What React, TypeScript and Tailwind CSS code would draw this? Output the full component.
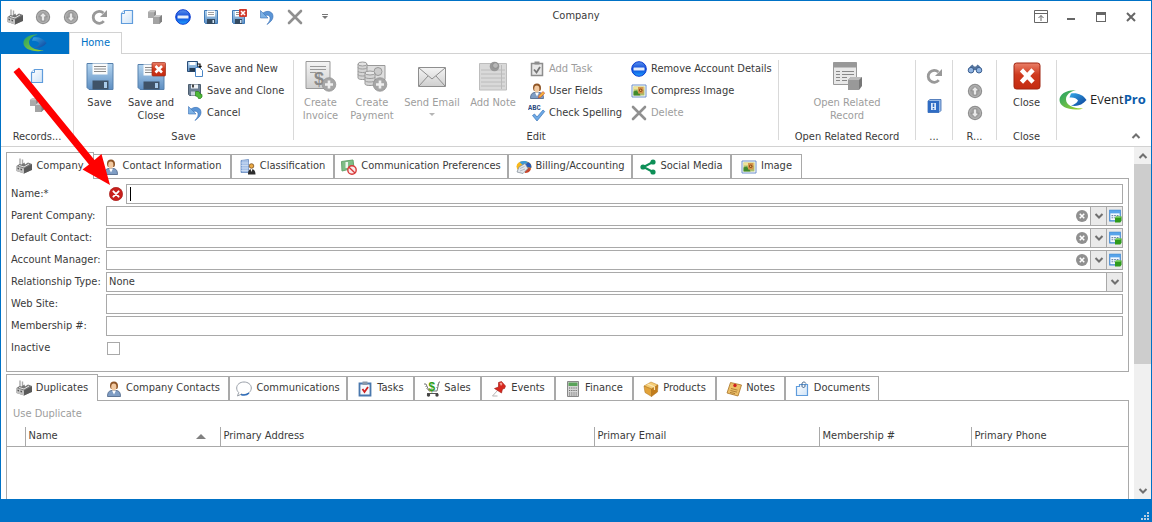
import type { ReactNode } from "react";

type IconProps = { className?: string };
const S16 = "h-4 w-4 shrink-0";

function Gradients() {
  return (
    <svg className="absolute h-0 w-0" aria-hidden="true">
      <defs>
        <linearGradient id="disk" x1="0" y1="0" x2="0" y2="1">
          <stop offset="0" stopColor="#b4d5f0" />
          <stop offset="1" stopColor="#5d8ec2" />
        </linearGradient>
        <linearGradient id="pale" x1="0" y1="0" x2="1" y2="1">
          <stop offset="0" stopColor="#ffffff" />
          <stop offset="1" stopColor="#cfe3f7" />
        </linearGradient>
        <linearGradient id="red" x1="0" y1="0" x2="0" y2="1">
          <stop offset="0" stopColor="#ea8069" />
          <stop offset="0.45" stopColor="#cf3a1e" />
          <stop offset="1" stopColor="#c42a10" />
        </linearGradient>
        <linearGradient id="blueball" x1="0" y1="0" x2="0" y2="1">
          <stop offset="0" stopColor="#5b93ee" />
          <stop offset="0.5" stopColor="#0b48d8" />
          <stop offset="1" stopColor="#22a0ff" />
        </linearGradient>
        <linearGradient id="swooshGreen" x1="0" y1="0" x2="1" y2="1">
          <stop offset="0" stopColor="#1e9f6a" />
          <stop offset="1" stopColor="#a5d52a" />
        </linearGradient>
        <linearGradient id="swooshBlue" x1="0" y1="0" x2="1" y2="1">
          <stop offset="0" stopColor="#35a9e8" />
          <stop offset="1" stopColor="#0b3f98" />
        </linearGradient>
        <linearGradient id="btnface" x1="0" y1="0" x2="0" y2="1">
          <stop offset="0" stopColor="#f4f4f4" />
          <stop offset="1" stopColor="#cfcfcf" />
        </linearGradient>
      </defs>
    </svg>
  );
}

function Svg16({ children, className = S16 }: { children: ReactNode; className?: string }) {
  return (
    <svg viewBox="0 0 16 16" className={className} aria-hidden="true">
      {children}
    </svg>
  );
}
function Svg28({ children }: { children: ReactNode }) {
  return (
    <svg viewBox="0 0 32 32" className="h-8 w-8 shrink-0" aria-hidden="true">
      {children}
    </svg>
  );
}

const Factory = () => (
  <Svg16>
    <path d="M4 0.5v7M6.5 1.5v6" stroke="#aaa" strokeWidth="1.4" />
    <path d="M0.5 8l3-2 2 .5 3-2 .5 2 3-2 4 1.5v5.500l-8 4-7.500-2.500z" fill="#777" />
    <path d="M0.500 8l7.500 2.500v5l-7.500-2.500z" fill="#c2c2c2" />
    <path d="M1.500 9.500l1.500.5v1.500l-1.500-.5zM4.500 10.500l1.500.5v1.500l-1.500-.5z" fill="#555" />
    <path d="M8 10.500l8-4v5.500l-8 3.500z" fill="#5a5a5a" />
    <path d="M3 7.500l5 1.500 5-3" stroke="#e6e6e6" fill="none" />
  </Svg16>
);
const RoundArrow = ({ down }: { down?: boolean }) => (
  <Svg16>
    <circle cx="8" cy="8" r="7.200" fill="#8f8f8f" />
    <circle cx="8" cy="8" r="5.600" fill="#a6a6a6" stroke="#bdbdbd" strokeWidth="0.700" />
    <path
      d={down ? "M8 12.500l4-4.200H9.700V4H6.300v4.300H4z" : "M8 3.500l4 4.200H9.700V12H6.300V7.700H4z"}
      fill="#e9e9e9"
      stroke="#808080"
      strokeWidth="0.700"
    />
  </Svg16>
);
const Refresh = () => (
  <Svg16>
    <path d="M12.800 12.200A6 6 0 1 1 12.400 4" fill="none" stroke="#999" strokeWidth="2.800" />
    <path d="M16 1v7H9z" fill="#999" />
  </Svg16>
);
const NewDoc = () => (
  <Svg16>
    <path d="M5.500 1.500h8v13h-11v-10z" fill="url(#pale)" stroke="#5f9cdc" strokeWidth="1.200" />
    <path d="M5.500 1.500v3h-3" fill="#fff" stroke="#5f9cdc" strokeWidth="1" />
  </Svg16>
);
const Cubes = () => (
  <Svg16>
    <path d="M1 3l2-1.500h6v6l-2 1.500H1z" fill="#8c8c8c" />
    <path d="M1 3.500h6V9H1z" fill="#aaa" />
    <path d="M1 3.500l2-2h6l-2 2z" fill="#c6c6c6" />
    <path d="M6 8l2.500-2H15v6.500L12.500 15H6z" fill="#808080" />
    <path d="M6 8h6.500v7H6z" fill="#a3a3a3" />
    <path d="M6 8l2.500-2H15l-2.500 2z" fill="#ccc" />
  </Svg16>
);
const BlueMinus = () => (
  <Svg16>
    <circle cx="8" cy="8" r="7.300" fill="url(#blueball)" stroke="#0a3bd0" strokeWidth="1" />
    <rect x="2.500" y="6.500" width="11" height="3" rx="0.500" fill="#e6eefb" />
  </Svg16>
);
const Disk = () => (
  <Svg16>
    <path d="M1.500 1.500h13v13H2.500l-1-1z" fill="url(#disk)" stroke="#3f7ab8" />
    <path d="M4 1.500h8v6H4z" fill="#fff" />
    <path d="M5 3.500h6M5 5.500h6" stroke="#888" strokeWidth="0.800" />
    <path d="M4 10h8v5H4z" fill="#344a60" />
    <path d="M9.500 11h1.500v3H9.500z" fill="#cfe3f5" />
  </Svg16>
);
const DiskClose = () => (
  <Svg16>
    <path d="M1.500 1.500h12v13H2.500l-1-1z" fill="url(#disk)" stroke="#3f7ab8" />
    <path d="M4 2h5v5.500H4z" fill="#fff" />
    <path d="M5 3.500h4M5 5.500h4" stroke="#777" strokeWidth="0.800" />
    <path d="M4 10h7v5H4z" fill="#344a60" />
    <path d="M9 11h1.500v3H9z" fill="#cfe3f5" />
    <rect x="8" y="0" width="8" height="8" rx="1" fill="#cf3a2c" />
    <path d="M10 2l4 4M14 2l-4 4" stroke="#fff" strokeWidth="1.600" />
  </Svg16>
);
const Undo = () => (
  <Svg16>
    <path d="M4 4C9 0.500 14.500 3 14 8c-.3 3-2.500 5-6 7.500C10.500 12.500 11.500 10.500 11 8.500 10.300 6 8 5.500 6 7z" fill="#5b95d6" stroke="#3a70b5" strokeWidth="0.600" />
    <path d="M1.500 1.500v7.500H9z" fill="#7db2e6" stroke="#3a70b5" strokeWidth="0.600" />
  </Svg16>
);
const GrayX = () => (
  <Svg16>
    <path d="M2 2l12 12M14 2L2 14" stroke="#909090" strokeWidth="2.600" strokeLinecap="round" />
  </Svg16>
);
const DiskNew = () => (
  <Svg16>
    <path d="M0.500 0.500h10v10H0.500z" fill="url(#disk)" stroke="#2b4e78" />
    <path d="M2.500 1h6v3h-6z" fill="#fff" />
    <path d="M2.500 7h6v3.500h-6z" fill="#24394f" />
    <path d="M8.500 6.500h4l3 3v6h-7z" fill="#fff" stroke="#4b86c6" />
    <path d="M10 3h3v3M11.500 5l1.500 1.500L14.500 5" stroke="#111" fill="none" strokeWidth="1.200" />
  </Svg16>
);
const DiskClone = () => (
  <Svg16>
    <path d="M1.500 1.500h12v11h-11l-1-1z" fill="#6c7f94" stroke="#4d5e70" />
    <path d="M4 1.500h7v4H4z" fill="#eef2f6" />
    <path d="M5 1.500h2v3H5z" fill="#444" />
    <path d="M4 8.500h5v4H4z" fill="#c9d3de" />
    <path d="M8.500 8.500h3l1.500 1.500v1l2 .5v2.500l-1.500 1.500h-2l-1-2-2-.5v-3z" fill="#4fba38" stroke="#2a7f1a" strokeWidth="0.700" />
  </Svg16>
);
const TaskGray = () => (
  <Svg16>
    <path d="M2.500 2.500h11v12h-11z" fill="#e8e8e8" stroke="#8d8d8d" strokeWidth="1.500" />
    <path d="M5.500 0.500h5v3h-5z" fill="#8d8d8d" />
    <path d="M5 8.500l2.500 3L11 6" stroke="#777" strokeWidth="1.800" fill="none" />
  </Svg16>
);
const TaskColor = () => (
  <Svg16>
    <path d="M2.500 2.500h11v12h-11z" fill="#f5f8fc" stroke="#4a78ad" strokeWidth="1.800" />
    <path d="M5.500 0.500h5v3.500h-5z" fill="#8a98a8" />
    <path d="M5.500 8l2 3L11 6" stroke="#d02020" strokeWidth="1.800" fill="none" />
  </Svg16>
);
const Person = ({ pencil }: { pencil?: boolean }) => (
  <Svg16>
    <path d="M1.500 15.500c0-4 1.500-6 4.500-6h4c3 0 4.500 2 4.500 6z" fill="#7f9dc4" stroke="#466084" strokeWidth="0.800" />
    <path d="M6 9.500L8 13.500l2-4z" fill="#fff" />
    <path d="M4 4.500C4 2 5.500 0.500 8 0.500s4 1.500 4 4.500c0 1.500-.5 2.500-1 3L5 8c-.6-.8-1-2-1-3.500z" fill="#8f5526" />
    <ellipse cx="7.800" cy="6" rx="2.600" ry="3.400" fill="#f2c9a0" />
    {pencil && <path d="M9.500 15l.5-2.500 4-4 1.700 1.700-4 4z" fill="#f6b63c" stroke="#c43a2a" strokeWidth="0.600" />}
  </Svg16>
);
const Spell = () => (
  <svg viewBox="0 0 18 18" className="h-4.5 w-4.5 shrink-0" aria-hidden="true">
    <text x="0" y="6" fontSize="7" fontWeight="700" fontFamily="Liberation Mono, monospace" fill="#2b4a80">
      ABC
    </text>
    <path d="M4.500 11.500l2-1.500 2.500 3 6-7 1.700 1.500L9 17z" fill="#6faae6" stroke="#3a74b8" strokeWidth="0.700" />
  </svg>
);
const Picture = () => (
  <Svg16>
    <path d="M1 2h14v12H1z" fill="#fff" stroke="#6d8fc9" strokeWidth="1" />
    <path d="M2.500 3.500h11v9h-11z" fill="#a9bf6a" />
    <path d="M2.500 3.500h11v3h-11z" fill="#efe29a" />
    <path d="M2.500 12.500v-4l3-1 3 3 1 2z" fill="#418a2c" />
    <path d="M7 4h5.500v6.500H7z" fill="#d4954c" />
    <circle cx="9.700" cy="7.200" r="1.700" fill="#8d4a18" />
    <circle cx="9.700" cy="7.200" r="0.700" fill="#f3c878" />
  </Svg16>
);
const Building = () => (
  <Svg16>
    <path d="M1 1.500L8.500 0.500v13H1z" fill="#8db0e0" stroke="#5a80b8" strokeWidth="0.700" />
    <path d="M3 1v12M5 1v12M7 1v12M1 4h7.500M1 6.500h7.500M1 9h7.500M1 11.500h7.500" stroke="#e2edfa" strokeWidth="0.600" />
    <circle cx="11.500" cy="7" r="2.300" fill="#e9a944" stroke="#6b3f10" strokeWidth="0.700" />
    <path d="M8 15.500c0-4 1.500-5.500 3.500-5.500s4 1.500 4 5.500z" fill="#2c2c2c" />
    <path d="M10.500 10l1 3 1-3z" fill="#fff" />
  </Svg16>
);
const NoComm = () => (
  <Svg16>
    <path d="M0.500 2.500L12 1l1 8-12 3z" fill="#7fbd86" stroke="#68a56f" />
    <path d="M4.500 3h2.500v6h-2.500z" fill="#eef8ef" />
    <circle cx="11" cy="11" r="4.200" fill="#fbe9e9" stroke="#d83a3a" strokeWidth="1.400" />
    <path d="M8 8.200l6 5.700" stroke="#d83a3a" strokeWidth="1.400" />
  </Svg16>
);
const Billing = () => (
  <Svg16>
    <ellipse cx="8" cy="7.500" rx="7.500" ry="5.500" fill="#f9b81c" />
    <path d="M8 7.500L3.500 3C6 1.500 10 1.500 12 3z" fill="#3a9ad8" />
    <path d="M8 7.500L12 3c2.500 1 3.800 3 3.300 6z" fill="#2558b8" />
    <path d="M8 7.500l7 2c-.5 3-3 4.500-6 4.500z" fill="#c8452a" />
    <path d="M1 13l2-5 6-3.500 3 5-5 5z" fill="#e3e7eb" stroke="#7d8894" strokeWidth="0.700" />
    <path d="M4 9.500l4.500-2M4 12l5-2" stroke="#9aa5b0" strokeWidth="0.700" />
  </Svg16>
);
const Share = () => (
  <Svg16>
    <path d="M13 3L3.500 8l9.500 5" stroke="#0d8f57" strokeWidth="2" fill="none" />
    <circle cx="13" cy="3" r="2.600" fill="#0d8f57" />
    <circle cx="3" cy="8" r="2.600" fill="#0d8f57" />
    <circle cx="13" cy="13" r="2.600" fill="#0d8f57" />
  </Svg16>
);
const Bubble = () => (
  <Svg16>
    <path d="M8 1c4 0 7.300 2.500 7.300 6S12 13.500 8 13.500c-1 0-1.800 0-2.600-.4L1.500 15l1.200-3.500C1.300 10.300.7 8.700.7 7 .7 3.500 4 1 8 1z" fill="#fff" stroke="#999fa8" />
    <path d="M5 13.500c3 1 6 .5 8-1.500" stroke="#2f6dbb" strokeWidth="1.500" fill="none" />
  </Svg16>
);
const Cart = () => (
  <Svg16>
    <path d="M0 3h2l3 7h8l2-9h1" stroke="#777" strokeWidth="1" fill="none" />
    <path d="M1.500 5l1 1M2.500 7.500l1 1M14 4h-1M13.500 6.500h-1" stroke="#777" />
    <path d="M3 12.500h11" stroke="#555" />
    <circle cx="4.500" cy="14" r="1.700" fill="#444" />
    <circle cx="13" cy="14" r="1.700" fill="#444" />
    <text x="4.500" y="9.500" fontSize="12" fontWeight="700" fontFamily="Liberation Sans, sans-serif" fill="#2f9e18">
      $
    </text>
  </Svg16>
);
const Pin = () => (
  <Svg16>
    <path d="M6.500 9.500L1.500 15h5" stroke="#b5b5b5" strokeWidth="1" fill="none" />
    <path d="M7.500 1.500l3-1 4 4.500-1 2.500-2 .5-1 4L3.500 7.500l4-1.500z" fill="#d8281e" stroke="#9a1610" strokeWidth="0.600" />
    <path d="M8.500 2l2-.5 1 1.500-1.500 2z" fill="#f49b93" />
  </Svg16>
);
const Calc = () => (
  <Svg16>
    <path d="M2.500 0.500h11v15h-11z" fill="#d5d5d5" stroke="#888" />
    <path d="M3.500 1.500h9v3.500h-9z" fill="#5aa35a" />
    <path d="M4 7h8M4 9.500h8M4 12h8M4 14h8" stroke="#6b6b6b" strokeWidth="1" strokeDasharray="1.200 1" />
  </Svg16>
);
const Box = () => (
  <Svg16>
    <path d="M1 5l7-4 7 3-6.500 4z" fill="#f6cd76" stroke="#b87d1e" strokeWidth="0.500" />
    <path d="M1 5l7.500 3v7.500L2 11.500z" fill="#e2a33a" stroke="#a86c14" strokeWidth="0.500" />
    <path d="M8.500 8L15 4l-.5 7-6 4.500z" fill="#c27d1c" stroke="#a86c14" strokeWidth="0.500" />
    <path d="M4.500 3l7 3v3" stroke="#fbe7b4" strokeWidth="1.200" fill="none" />
  </Svg16>
);
const NoteIcon = () => (
  <Svg16>
    <path d="M4.500 1.500l11 2.500-3.500 11L1 12z" fill="#edbf67" stroke="#a8742a" strokeWidth="0.800" />
    <path d="M5 7.500l6.500 1.600M4.500 9.500l6.500 1.600M4 11.400l5 1.200" stroke="#a0702c" strokeWidth="0.800" />
    <circle cx="9" cy="4.500" r="1.700" fill="#cf2020" />
  </Svg16>
);
const DocClip = () => (
  <Svg16>
    <path d="M2.500 5.500h3v-2h8v11h-11z" fill="url(#pale)" stroke="#5f9cdc" strokeWidth="1.200" />
    <path d="M12 2.500c-1-2-4-2-4 .5v2c0 2 3 2 3 0V3.500" fill="none" stroke="#3e5f85" />
  </Svg16>
);
const Book = () => (
  <Svg16>
    <path d="M2 3l2-1.500h11v11L13 14.500H2z" fill="#9cbce6" stroke="#3a69b0" strokeWidth="0.800" />
    <path d="M2 3h11v11.500H2z" fill="#2f6cc4" />
    <path d="M5 5h5v7H5z" fill="#dbe8fa" />
    <path d="M7.500 5.500v3.500M7.500 10v1.500" stroke="#2f6cc4" strokeWidth="1.500" />
  </Svg16>
);
const Binoculars = () => (
  <Svg16>
    <path d="M3.500 5l2-1.500 1.500 2h2l1.500-2 2 1.500 2 3v3H9.500l-.5-2H7l-.5 2H1.500V8z" fill="#53739c" />
    <circle cx="4" cy="9.200" r="2.800" fill="#8fb4e2" stroke="#3d5f8f" />
    <circle cx="12" cy="9.200" r="2.800" fill="#8fb4e2" stroke="#3d5f8f" />
  </Svg16>
);
const LookupNew = () => (
  <Svg16 className="h-3.5 w-3.5 shrink-0">
    <path d="M2 1.500h12v12H2z" fill="#f4f9ff" stroke="#3d86d0" strokeWidth="1.300" />
    <path d="M2 1.500h12V5H2z" fill="#58a4ea" />
    <path d="M4 7.500h8M4 10h4" stroke="#6d89a8" strokeWidth="1.300" strokeDasharray="2 1" />
    <path d="M8 10l1.200-1.500h6.300v5L14 15.500H8z" fill="#2f9a1c" />
    <path d="M8 10l1.200-1.500h6.300L14 10z" fill="#83d65f" />
  </Svg16>
);
const ErrorIcon = () => (
  <Svg16 className="h-3.5 w-3.5">
    <circle cx="8" cy="8" r="7.600" fill="#c8201c" stroke="#a31512" strokeWidth="0.700" />
    <path d="M5 5l6 6M11 5l-6 6" stroke="#fff" strokeWidth="2.200" strokeLinecap="round" />
  </Svg16>
);
const Chevron = ({ up, className = "h-2 w-2.5" }: IconProps & { up?: boolean }) => (
  <svg viewBox="0 0 10 8" className={className} aria-hidden="true">
    <path d={up ? "M1.500 6L5 2.500 8.500 6" : "M1.500 2L5 5.500 8.500 2"} fill="none" stroke="#707070" strokeWidth="2" />
  </svg>
);

const BigDisk = () => (
  <Svg28>
    <path d="M3 3.500h26v26H5l-2-2z" fill="url(#disk)" stroke="#5781ad" />
    <path d="M8.500 3.500h15v11h-15z" fill="#fbfbfb" />
    <path d="M10 6.500h12M10 9h12M10 11.500h12" stroke="#8a8a8a" />
    <path d="M8.500 20.500h16v9h-16z" fill="#3f5368" />
    <path d="M20 22h3v6h-3z" fill="#a9cbea" />
  </Svg28>
);
const BigDiskClose = () => (
  <Svg28>
    <path d="M3 4.500h26v25H5l-2-2z" fill="url(#disk)" stroke="#5781ad" />
    <path d="M8.500 4.500h12v11h-12z" fill="#fbfbfb" />
    <path d="M10 7.500h8M10 10h8M10 12.500h8" stroke="#8a8a8a" />
    <path d="M8.500 21.500h16v8h-16z" fill="#3f5368" />
    <path d="M20 23h3v5h-3z" fill="#a9cbea" />
    <rect x="17" y="2.500" width="13.500" height="13.500" rx="1" fill="url(#red)" stroke="#9d2b18" strokeWidth="0.700" />
    <path d="M20.500 6l6.500 6.500M27 6l-6.500 6.500" stroke="#fff" strokeWidth="2.600" />
  </Svg28>
);
const PlusBadge = () => (
  <>
    <circle cx="24" cy="24.500" r="6.800" fill="#a6a6a6" stroke="#8f8f8f" strokeWidth="0.700" />
    <path d="M24 20.500v8M20 24.500h8" stroke="#eee" strokeWidth="2.600" />
  </>
);
const BigInvoice = () => (
  <Svg28>
    <path d="M1 1.500h24v27H1z" fill="url(#btnface)" stroke="#999" />
    <path d="M5 6.500h16M5 9.500h16M5 12.500h6" stroke="#999" />
    <text x="9" y="25" fontSize="18" fontWeight="700" fontFamily="Liberation Sans, sans-serif" fill="#8a8a8a">
      $
    </text>
    <PlusBadge />
  </Svg28>
);
const BigPayment = () => (
  <Svg28>
    <path d="M10 5.500h19v14H10z" fill="#dedede" stroke="#999" />
    <circle cx="22" cy="11.500" r="4" fill="#ccc" stroke="#999" />
    <path d="M2 4v14c0 2 9 2 9 0V4" fill="#d5d5d5" stroke="#9a9a9a" />
    <ellipse cx="6.500" cy="4" rx="4.500" ry="2" fill="#e3e3e3" stroke="#9a9a9a" />
    <path d="M2 7.500c0 2 9 2 9 0M2 11c0 2 9 2 9 0M2 14.500c0 2 9 2 9 0" fill="none" stroke="#9a9a9a" />
    <path d="M9 13v11c0 2 10 2 10 0V13" fill="#d5d5d5" stroke="#999" />
    <ellipse cx="14" cy="13" rx="5" ry="2" fill="#e6e6e6" stroke="#999" />
    <path d="M9 17c0 2 10 2 10 0M9 20.500c0 2 10 2 10 0" fill="none" stroke="#9a9a9a" />
    <PlusBadge />
  </Svg28>
);
const BigMail = () => (
  <Svg28>
    <path d="M2.500 7.500h27v19h-27z" fill="url(#btnface)" stroke="#8e8e8e" />
    <path d="M3 8l13 11L29 8M3 26l9-10M29 26l-9-10" fill="none" stroke="#8e8e8e" />
  </Svg28>
);
const BigNote = () => (
  <Svg28>
    <path d="M2.500 3.500h27v26.500h-27z" fill="#d9d9d9" stroke="#bdbdbd" />
    <path d="M4 10h24M4 14h24M4 18h24M4 22h24M4 26h24" stroke="#bcbcbc" />
    <path d="M24.500 5v24" stroke="#bbb" />
    <circle cx="17.500" cy="6.500" r="4.800" fill="#999" />
    <circle cx="18.500" cy="5.500" r="2.800" fill="#b8b8b8" stroke="#808080" strokeWidth="0.600" />
  </Svg28>
);
const BigRelated = () => (
  <Svg28>
    <path d="M2.500 2.500h23v22h-23z" fill="#e8e8e8" stroke="#999" />
    <path d="M2.500 2.500h23v5h-23z" fill="#989898" />
    <path d="M5 11.500h4M5 14.500h4M5 17.500h4M5 20.500h4M11 11.500h12M11 14.500h12M11 17.500h5M11 20.500h5" stroke="#888" strokeWidth="1" />
    <path d="M17 20l3-3h11v9l-3 4H17z" fill="#777" />
    <path d="M17 20h11v10H17z" fill="#999" />
    <path d="M17 20l3-3h11l-3 3z" fill="#bbb" />
  </Svg28>
);
const BigClose = () => (
  <Svg28>
    <rect x="3" y="3" width="26" height="26" rx="2.500" fill="url(#red)" stroke="#a02411" />
    <path d="M12 11.500l8.500 9M20.500 11.500l-8.500 9" stroke="#fff" strokeWidth="4.500" strokeLinecap="square" />
  </Svg28>
);

const Swoosh = ({ className }: IconProps) => (
  <svg viewBox="0 0 28 20" className={className} aria-hidden="true">
    <path d="M17 0.300C8-.5 0.500 4 0.500 10c0 6 8 10 18 9.500 2 0 4-.6 5.500-1.300C16 19 7 15.500 7 9.500 7 5 11 1.500 17 .3z" fill="url(#swooshGreen)" />
    <path d="M12 3.500c6-1 12 1 15.500 6.500-4 5-10 7-15.500 5.500 3.500-1 6-2.500 7-5-1.500-2.500-4.500-3.500-8.500-3z" fill="url(#swooshBlue)" />
  </svg>
);

function BigButton({ icon, lines, width, disabled, arrow }: { icon: ReactNode; lines: string[]; width: string; disabled?: boolean; arrow?: boolean }) {
  return (
    <button type="button" disabled={disabled} className={`flex flex-col items-center ${width} ${disabled ? "text-[#9d9d9d]" : ""}`}>
      {icon}
      <span className="mt-1 flex flex-col text-center leading-[13px] whitespace-nowrap">
        {lines.map((l) => (
          <span key={l}>{l}</span>
        ))}
      </span>
      {arrow && <span className="mt-1 border-x-3 border-t-3 border-x-transparent border-t-[#b5b5b5]" />}
    </button>
  );
}
function SmallButton({ icon, label, disabled }: { icon: ReactNode; label: string; disabled?: boolean }) {
  return (
    <button type="button" disabled={disabled} className={`flex h-[18px] items-center gap-1 whitespace-nowrap ${disabled ? "text-[#9d9d9d]" : ""}`}>
      <span className="flex w-4 justify-center">{icon}</span>
      {label}
    </button>
  );
}
function Group({ label, width, children }: { label: string; width: string; children: ReactNode }) {
  return (
    <section className={`flex shrink-0 flex-col border-r border-[#d9d9d9] ${width}`}>
      <div className="flex flex-1">{children}</div>
      <h2 className="h-2.5 text-center leading-[14px] whitespace-nowrap">{label}</h2>
    </section>
  );
}

function IconButton({ label, children }: { label: string; children: ReactNode }) {
  return (
    <button type="button" aria-label={label} className="flex h-[18px] w-7 items-center justify-center">
      {children}
    </button>
  );
}

const quick: [string, ReactNode][] = [
  ["Company", <Factory />],
  ["Previous", <RoundArrow />],
  ["Next", <RoundArrow down />],
  ["Refresh", <Refresh />],
  ["New", <NewDoc />],
  ["Clone", <Cubes />],
  ["Remove account details", <BlueMinus />],
  ["Save", <Disk />],
  ["Save and close", <DiskClose />],
  ["Undo", <Undo />],
  ["Delete", <GrayX />],
];

type Tab = { label: string; icon: ReactNode; width: string };
const topTabs: Tab[] = [
  { label: "Company", icon: <Factory />, width: "w-[88px]" },
  { label: "Contact Information", icon: <Person />, width: "w-[137px]" },
  { label: "Classification", icon: <Building />, width: "w-[103px]" },
  { label: "Communication Preferences", icon: <NoComm />, width: "w-[174px]" },
  { label: "Billing/Accounting", icon: <Billing />, width: "w-[124px]" },
  { label: "Social Media", icon: <Share />, width: "w-[99px]" },
  { label: "Image", icon: <Picture />, width: "w-[71px]" },
];
const bottomTabs: Tab[] = [
  { label: "Duplicates", icon: <Factory />, width: "w-[92px]" },
  { label: "Company Contacts", icon: <Person />, width: "w-[131px]" },
  { label: "Communications", icon: <Bubble />, width: "w-[118px]" },
  { label: "Tasks", icon: <TaskColor />, width: "w-[67px]" },
  { label: "Sales", icon: <Cart />, width: "w-[67px]" },
  { label: "Events", icon: <Pin />, width: "w-[74px]" },
  { label: "Finance", icon: <Calc />, width: "w-[78px]" },
  { label: "Products", icon: <Box />, width: "w-[83px]" },
  { label: "Notes", icon: <NoteIcon />, width: "w-[69px]" },
  { label: "Documents", icon: <DocClip />, width: "w-[94px]" },
];

function Tabs({ tabs }: { tabs: Tab[] }) {
  return (
    <div role="tablist" className="flex h-[27px] items-end">
      {tabs.map((t, i) => (
        <button
          key={t.label}
          type="button"
          role="tab"
          aria-selected={i === 0}
          className={`flex shrink-0 items-center justify-center gap-1 border-[#a9a9a9] whitespace-nowrap ${t.width} ${
            i === 0 ? "h-[27px] border-x border-t" : i === 1 ? "h-[25px] border-y border-r" : "h-[25px] border"
          }`}
        >
          {t.icon}
          {t.label}
        </button>
      ))}
      <div className="flex-1 self-stretch border-b border-[#a9a9a9]" />
    </div>
  );
}

function Field({ id, label, children }: { id: string; label: string; children: ReactNode }) {
  return (
    <div className="flex h-5 items-center">
      <label htmlFor={id} className="w-[95px] shrink-0 whitespace-nowrap">
        {label}
      </label>
      {children}
    </div>
  );
}
const box = "h-5 min-w-0 flex-1 border border-[#a9a9a9] bg-white px-0.5 outline-none";

function Lookup({ id, label }: { id: string; label: string }) {
  return (
    <Field id={id} label={label}>
      <div className="flex h-5 min-w-0 flex-1 border border-[#a9a9a9]">
        <input id={id} type="text" className="min-w-0 flex-1 px-0.5 outline-none" />
        <button type="button" aria-label={`Clear ${label}`} className="flex w-4 items-center justify-center">
          <Svg16 className="h-3 w-3">
            <circle cx="8" cy="8" r="8" fill="#909090" />
            <path d="M5 5l6 6M11 5l-6 6" stroke="#fff" strokeWidth="2" />
          </Svg16>
        </button>
        <button type="button" aria-label={`Choose ${label}`} className="flex w-4 items-center justify-center border-l border-[#a9a9a9] bg-[#eaeaea]">
          <Chevron />
        </button>
        <button type="button" aria-label={`New ${label}`} className="flex w-4 items-center justify-center border-l border-[#a9a9a9] bg-[#eaeaea]">
          <LookupNew />
        </button>
      </div>
    </Field>
  );
}

const heads: [string, string][] = [
  ["", "w-[18px]"],
  ["Name", "w-[195px]"],
  ["Primary Address", ""],
  ["Primary Email", "w-[225px]"],
  ["Membership #", "w-[152px]"],
  ["Primary Phone", "w-[157px]"],
];

export default function App() {
  return (
    <div className="relative flex min-h-screen flex-col overflow-hidden border border-b-0 border-[#0072c6] bg-white font-['DejaVu_Sans_Condensed','Roboto',sans-serif] text-[11px] text-[#3a3a3a]">
      <Gradients />

      <header className="grid h-[31px] grid-cols-[1fr_auto_1fr] items-center">
        <div className="flex items-center">
          {quick.map(([label, icon]) => (
            <IconButton key={label} label={label}>
              {icon}
            </IconButton>
          ))}
          <button type="button" aria-label="Customize toolbar" className="ml-1 flex w-6 flex-col items-center gap-px">
            <span className="h-px w-1.5 bg-[#777]" />
            <span className="border-x-3 border-t-3 border-x-transparent border-t-[#777]" />
          </button>
        </div>
        <h1>Company</h1>
        <div className="flex justify-end pr-[5px]">
          <button type="button" aria-label="Ribbon display options" className="flex w-[30px] items-center justify-center">
            <svg viewBox="0 0 14 13" className="h-[13px] w-3.5">
              <path d="M.5.5h13v12H.5zM.5 3.500h13M7 11V5.500M4.500 8L7 5.500 9.500 8" fill="none" stroke="#666" />
            </svg>
          </button>
          <button type="button" aria-label="Minimize" className="flex w-[30px] items-center justify-center pt-1">
            <span className="h-0.5 w-2 bg-[#666]" />
          </button>
          <button type="button" aria-label="Maximize" className="flex w-[30px] items-center justify-center">
            <span className="h-2.5 w-2.5 border border-t-3 border-[#666]" />
          </button>
          <button type="button" aria-label="Close window" className="flex w-[30px] items-center justify-center">
            <svg viewBox="0 0 10 10" className="h-2.5 w-2.5">
              <path d="M1 1l8 8M9 1L1 9" stroke="#666" strokeWidth="2" />
            </svg>
          </button>
        </div>
      </header>

      <nav className="flex h-[22px]">
        <button type="button" aria-label="Application menu" className="flex w-[68px] items-center justify-center bg-[#0072c6]">
          <Swoosh className="h-[18px] w-6" />
        </button>
        <button type="button" className="w-[53px] border-x border-t border-[#d2d2d2] text-[#0072c6]">
          Home
        </button>
        <div className="flex-1 border-b border-[#d2d2d2]" />
      </nav>

      <div className="flex h-[93px] border-b border-[#d2d2d2] pt-1.5 pb-1.5">
        <Group label="Records..." width="w-[73px]">
          <div className="flex w-full flex-col items-center gap-[11px] pt-[7px]">
            <IconButton label="New record">
              <NewDoc />
            </IconButton>
            <IconButton label="Clone record">
              <Cubes />
            </IconButton>
          </div>
        </Group>
        <Group label="Save" width="w-[220px]">
          <BigButton icon={<BigDisk />} lines={["Save"]} width="w-[51px]" />
          <BigButton icon={<BigDiskClose />} lines={["Save and", "Close"]} width="w-[52px]" />
          <div className="flex flex-col gap-1 pl-2.5">
            <SmallButton icon={<DiskNew />} label="Save and New" />
            <SmallButton icon={<DiskClone />} label="Save and Clone" />
            <SmallButton icon={<Undo />} label="Cancel" />
          </div>
        </Group>
        <Group label="Edit" width="w-[485px]">
          <BigButton icon={<BigInvoice />} lines={["Create", "Invoice"]} width="w-[53px]" disabled />
          <BigButton icon={<BigPayment />} lines={["Create", "Payment"]} width="w-[50px]" disabled />
          <BigButton icon={<BigMail />} lines={["Send Email"]} width="w-[70px]" disabled arrow />
          <BigButton icon={<BigNote />} lines={["Add Note"]} width="w-[52px]" disabled />
          <div className="flex flex-col gap-1 pl-2.5">
            <SmallButton icon={<TaskGray />} label="Add Task" disabled />
            <SmallButton icon={<Person pencil />} label="User Fields" />
            <SmallButton icon={<Spell />} label="Check Spelling" />
          </div>
          <div className="flex-1" />
          <div className="flex w-[147px] shrink-0 flex-col gap-1">
            <SmallButton icon={<BlueMinus />} label="Remove Account Details" />
            <SmallButton icon={<Picture />} label="Compress Image" />
            <SmallButton icon={<GrayX />} label="Delete" disabled />
          </div>
        </Group>
        <Group label="Open Related Record" width="w-[137px]">
          <BigButton icon={<BigRelated />} lines={["Open Related", "Record"]} width="w-full" disabled />
        </Group>
        <Group label="..." width="w-[37px]">
          <div className="flex w-full flex-col items-center gap-3 pt-[7px]">
            <IconButton label="Refresh record">
              <Refresh />
            </IconButton>
            <IconButton label="Help">
              <Book />
            </IconButton>
          </div>
        </Group>
        <Group label="R..." width="w-11">
          <div className="flex w-full flex-col items-center gap-1">
            <IconButton label="Find">
              <Binoculars />
            </IconButton>
            <IconButton label="Previous record">
              <RoundArrow />
            </IconButton>
            <IconButton label="Next record">
              <RoundArrow down />
            </IconButton>
          </div>
        </Group>
        <Group label="Close" width="w-[60px]">
          <BigButton icon={<BigClose />} lines={["Close"]} width="w-full" />
        </Group>
        <div className="flex min-w-0 flex-1 flex-col justify-between pl-0.5">
          <div className="flex items-center gap-[3px] pt-[29px]">
            <Swoosh className="h-5 w-7 shrink-0" />
            <span className="font-['Open_Sans',sans-serif] text-[13px] leading-5 whitespace-nowrap text-[#222]">
              E<span className="text-[11px]">V</span>ent<b className="text-[#0b5cab]">Pro</b>
            </span>
          </div>
          <button type="button" aria-label="Collapse ribbon" className="mr-2.5 self-end">
            <Chevron up />
          </button>
        </div>
      </div>

      <div className="flex min-h-0 flex-1">
        <main className="flex min-w-0 flex-1 flex-col pt-[5px] pr-[5px] pl-[5px]">
          <Tabs tabs={topTabs} />
          <form className="flex flex-col gap-0.5 border-x border-b border-[#a9a9a9] pt-[5px] pr-[5px] pb-[13px] pl-1">
            <Field id="name" label="Name:*">
              <span className="flex w-5 justify-center">
                <ErrorIcon />
              </span>
              <div className={`flex items-center ${box}`}>
                <span className="ml-px h-3.5 w-px bg-black" />
                <input id="name" type="text" className="min-w-0 flex-1 outline-none" />
              </div>
            </Field>
            <Lookup id="parent" label="Parent Company:" />
            <Lookup id="contact" label="Default Contact:" />
            <Lookup id="manager" label="Account Manager:" />
            <Field id="relationship" label="Relationship Type:">
              <div className="relative flex h-5 min-w-0 flex-1 border border-[#a9a9a9]">
                <select id="relationship" className="min-w-0 flex-1 appearance-none px-0.5 outline-none">
                  <option>None</option>
                </select>
                <span className="pointer-events-none absolute inset-y-0 right-0 flex w-4 items-center justify-center border-l border-[#a9a9a9] bg-[#eaeaea]">
                  <Chevron />
                </span>
              </div>
            </Field>
            <Field id="site" label="Web Site:">
              <input id="site" type="text" className={box} />
            </Field>
            <Field id="membership" label="Membership #:">
              <input id="membership" type="text" className={box} />
            </Field>
            <Field id="inactive" label="Inactive">
              <input id="inactive" type="checkbox" className="ml-px h-[13px] w-[13px] appearance-none border border-[#a9a9a9] bg-white" />
            </Field>
          </form>

          <div className="pt-0.5">
            <Tabs tabs={bottomTabs} />
          </div>
          <section className="flex-1 border-x border-[#a9a9a9]">
            <button type="button" disabled className="block h-[26px] px-1.5 text-[#9d9d9d]">
              Use Duplicate
            </button>
            <table className="w-full table-fixed border-collapse">
              <thead>
                <tr className="h-[19px] border-b border-[#a9a9a9]">
                  {heads.map(([h, w], i) => (
                    <th key={h || "marker"} scope="col" className={`p-0 text-left font-normal ${w} ${i > 0 ? "border-l border-[#a9a9a9] pl-[3px]" : ""}`}>
                      {h === "Name" ? (
                        <span className="flex items-center justify-between pr-3.5">
                          Name
                          <span className="border-x-5 border-b-5 border-x-transparent border-b-[#808080]" />
                        </span>
                      ) : (
                        h
                      )}
                    </th>
                  ))}
                </tr>
              </thead>
            </table>
          </section>
        </main>
        <div className="flex w-[17px] shrink-0 flex-col bg-[#f0f0f0]" role="scrollbar" aria-controls="root" aria-valuenow={0}>
          <button type="button" aria-label="Scroll up" className="flex h-[17px] items-center justify-center">
            <Chevron up />
          </button>
          <div className="h-[200px] bg-[#cdcdcd]" />
          <div className="flex-1" />
          <button type="button" aria-label="Scroll down" className="flex h-[17px] items-center justify-center">
            <Chevron />
          </button>
        </div>
      </div>

      <footer className="flex h-[23px] items-end justify-end bg-[#0072c6] p-0.5">
        <svg viewBox="0 0 8 8" className="h-2 w-2" aria-hidden="true">
          <path d="M6 0h2v2H6zM3 3h2v2H3zM6 3h2v2H6zM0 6h2v2H0zM3 6h2v2H3zM6 6h2v2H6z" fill="#b9cfe2" />
        </svg>
      </footer>

      <svg viewBox="0 0 120 130" className="pointer-events-none absolute top-[59px] -left-px h-[130px] w-[120px]" aria-hidden="true">
        <path d="M13.500 12L19 7.500l75.500 92.500 7-6L110 125l-27.500-15.500 6.500-5z" fill="#f00" />
      </svg>
    </div>
  );
}
